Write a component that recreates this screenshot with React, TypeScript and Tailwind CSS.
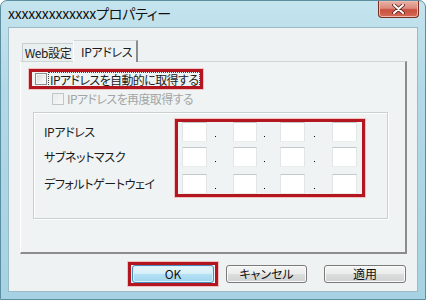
import React from "react";

function CheckBox({ disabled }: { disabled?: boolean }) {
  return (
    <div
      className={
        disabled
          ? "shrink-0 w-[12px] h-[12px] border border-[#c2c6c6] bg-[linear-gradient(135deg,#e9ecec,#f7f8f8)]"
          : "shrink-0 w-[12px] h-[12px] border border-[#8a8c8c] bg-[linear-gradient(135deg,#d3d6d6,#f3f4f4_70%,#ffffff)] shadow-[inset_0_0_0_1px_#f4f4f4]"
      }
    />
  );
}

function Field({ w = "w-[25px]" }: { w?: string }) {
  return (
    <div className={`${w} h-[20px] bg-white border-t border-t-[#c3c8c8] border-x border-x-[#e2e6e6] border-b border-b-[#eceeee]`} />
  );
}

function FieldRow({ mt }: { mt: string }) {
  return (
    <div className={`flex ${mt}`}>
      <Field />
      <div className="w-[26px] h-[20px] flex">
        <div className="ml-[8px] mt-[14px] w-[1px] h-[1px] bg-[#111]" />
      </div>
      <Field w="w-[24px]" />
      <div className="w-[23px] h-[20px] flex">
        <div className="ml-[7px] mt-[14px] w-[1px] h-[1px] bg-[#111]" />
      </div>
      <Field />
      <div className="w-[27px] h-[20px] flex">
        <div className="ml-[9px] mt-[14px] w-[1px] h-[1px] bg-[#111]" />
      </div>
      <Field />
    </div>
  );
}

function Button({ children, w, focused }: { children: React.ReactNode; w: string; focused?: boolean }) {
  return (
    <div
      className={
        focused
          ? `${w} h-[18px] rounded-[3px] border border-[#4a8dba] bg-[linear-gradient(180deg,#eaf7fd_0%,#d3eef9_50%,#b4e1f4_51%,#9fd5ee_100%)] shadow-[inset_0_0_0_1px_#d6f1fc] flex items-center justify-center text-[12px] leading-[14px] text-[#111]`
          : `${w} h-[18px] rounded-[3px] border border-[#7a7a7a] bg-[linear-gradient(180deg,#f4f5f5_0%,#ebeded_48%,#dcdede_52%,#cfd2d2_100%)] shadow-[inset_0_0_0_1px_#fafafa] flex items-center justify-center text-[12px] leading-[14px] text-[#111]`
      }
    >
      {children}
    </div>
  );
}

export default function App() {
  return (
    <div className="w-[426px] h-[300px] flex flex-col bg-[linear-gradient(180deg,#c4e4ee_0%,#b2d9e7_30%,#a6d2e3_100%)] border border-[#5b8ea1] rounded-t-[7px] overflow-hidden font-['Noto_Sans_CJK_JP',sans-serif] [font-feature-settings:'palt'] text-[#1b1b1b]">
      {/* title bar */}
      <div className="h-[26px] flex items-start justify-between">
        <div className="pl-[7px] pt-[3px] text-[14px] leading-[18px] text-[#111] tracking-[-0.2px]">
          xxxxxxxxxxxxxプロパティー
        </div>
        <div className="mr-[6px] w-[41px] h-[17px] rounded-b-[4px] border border-t-0 border-[#7a2e24] bg-[linear-gradient(180deg,#eab1a6_0%,#dc8b7d_45%,#c8503f_55%,#d56a55_100%)] shadow-[inset_0_0_0_1px_#f0b9ad] flex items-center justify-center">
          <svg width="13" height="10" viewBox="0 0 13 10">
            <path d="M2 1 L11 9 M11 1 L2 9" stroke="#5a1f18" strokeWidth="3.6" strokeLinecap="round" />
            <path d="M2 1 L11 9 M11 1 L2 9" stroke="#ffffff" strokeWidth="2" strokeLinecap="round" />
          </svg>
        </div>
      </div>

      {/* client area */}
      <div className="mx-[7px] h-[265px] border border-[#99bac6] bg-[#eef2f2] px-[11px] pt-[12px]">
        {/* tabs */}
        <div className="flex items-end h-[21px] pl-[2px]">
          <div className="w-[51px] h-[18px] border-t border-l border-[#c6cece] bg-[#e9eeee] flex items-center justify-center text-[12px] leading-[14px] tracking-[-0.4px]">
            Web設定
          </div>
          <div className="relative z-10 w-[65px] h-[22px] -mb-[1px] border-t border-l border-t-[#cfd6d6] border-l-white border-r-2 border-r-[#8c8e8e] bg-[#eef2f2] flex items-center pl-[7px] text-[12px] leading-[14px] tracking-[-0.3px]">
            IPアドレス
          </div>
        </div>

        {/* panel */}
        <div className="w-[387px] h-[193px] border-t border-l border-t-[#cdd4d4] border-l-white border-r-2 border-b-2 border-r-[#8b8d8d] border-b-[#8b8d8d] bg-[#eff3f3]">
          {/* checkbox 1 */}
          <div className="ml-[8px] mt-[7px] w-[174px] h-[20px] border-[3px] border-[#b3161e] shadow-[0_0_0_1px_#f1c0c0] flex items-center pl-[3px]">
            <CheckBox />
            <div className="ml-[1px] border border-dotted border-[#444] px-[1px] text-[12px] leading-[13px] tracking-[-0.6px] whitespace-nowrap">
              IPアドレスを自動的に取得する
            </div>
          </div>
          {/* checkbox 2 */}
          <div className="ml-[31px] mt-[3px] h-[13px] flex items-center">
            <CheckBox disabled />
            <div className="ml-[3px] text-[12px] leading-[13px] text-[#a2a6a6] tracking-[-0.6px] whitespace-nowrap">
              IPアドレスを再度取得する
            </div>
          </div>
          {/* group */}
          <div className="ml-[12px] mt-[7px] w-[355px] h-[107px] border border-[#c9d0d0] shadow-[inset_1px_1px_0_#ffffff,1px_1px_0_#ffffff] flex pl-[10px] pt-[6px]">
            <div className="w-[131px] pt-[3px] flex flex-col text-[12px] leading-[14px] tracking-[-0.4px]">
              <div className="h-[20px] flex items-center">IPアドレス</div>
              <div className="h-[20px] mt-[5px] flex items-center">サブネットマスク</div>
              <div className="h-[20px] mt-[7px] flex items-center">デフォルトゲートウェイ</div>
            </div>
            <div className="w-[190px] h-[78px] border-[3px] border-[#b3161e] shadow-[0_0_0_1px_#f1c0c0] pl-[4px]">
              <FieldRow mt="" />
              <FieldRow mt="mt-[5px]" />
              <FieldRow mt="mt-[7px]" />
            </div>
          </div>
        </div>

        {/* buttons */}
        <div className="w-[387px] mt-[8px] flex items-center justify-end pr-[1px]">
          <div className="border-[3px] border-[#b3161e] shadow-[0_0_0_1px_#f1c0c0] px-[1px]">
            <Button w="w-[82px]" focused>OK</Button>
          </div>
          <div className="ml-[8px]">
            <Button w="w-[81px]">キャンセル</Button>
          </div>
          <div className="ml-[17px]">
            <Button w="w-[82px]">適用</Button>
          </div>
        </div>
      </div>
    </div>
  );
}
